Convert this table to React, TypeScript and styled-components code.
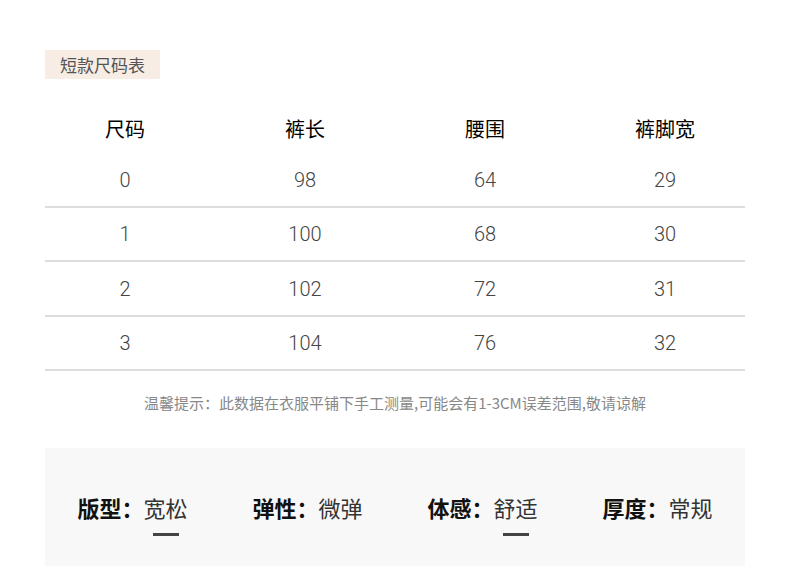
import React from 'react';
import styled, { createGlobalStyle } from 'styled-components';

const FONT = `"Noto Sans CJK SC", "Noto Sans", sans-serif`;
const NUM_FONT = `Roboto, "Noto Sans CJK SC", sans-serif`;

const headers = ['尺码', '裤长', '腰围', '裤脚宽'];
const rows = [
  ['0', '98', '64', '29'],
  ['1', '100', '68', '30'],
  ['2', '102', '72', '31'],
  ['3', '104', '76', '32'],
];

const features = [
  { label: '版型', value: '宽松', marked: true },
  { label: '弹性', value: '微弹', marked: false },
  { label: '体感', value: '舒适', marked: true },
  { label: '厚度', value: '常规', marked: false },
];

export default function App() {
  return (
    <>
      <GlobalStyle />
      <Page>
        <Tag>短款尺码表</Tag>
        <Table>
          <HeadRow>
            <Cells>
              {headers.map((h) => (
                <HeadCell key={h}>{h}</HeadCell>
              ))}
            </Cells>
          </HeadRow>
          {rows.map((r) => (
            <DataRow key={r[0]}>
              <Cells>
                {r.map((v, i) => (
                  <DataCell key={i}>{v}</DataCell>
                ))}
              </Cells>
            </DataRow>
          ))}
        </Table>
        <Note>温馨提示：此数据在衣服平铺下手工测量,可能会有1-3CM误差范围,敬请谅解</Note>
        <FeaturePanel>
          {features.map((f) => (
            <Feature key={f.label}>
              <Label>{f.label}：</Label>
              <ValueWrap>
                <Value>{f.value}</Value>
                {f.marked && <Mark />}
              </ValueWrap>
            </Feature>
          ))}
        </FeaturePanel>
      </Page>
    </>
  );
}

const GlobalStyle = createGlobalStyle`
  html, body {
    margin: 0;
    padding: 0;
    background: #ffffff;
  }
  body {
    font-family: ${FONT};
  }
`;

const Page = styled.div`
  width: 790px;
  height: 567px;
  padding: 50px 45px 0;
  box-sizing: border-box;
  overflow: hidden;
  display: flex;
  flex-direction: column;
  align-items: flex-start;
`;

const Tag = styled.div`
  height: 29px;
  padding: 0 15px;
  background: #f7ede4;
  color: #555;
  font-size: 17px;
  line-height: 29px;
  font-family: ${FONT};
`;

const Table = styled.div`
  width: 700px;
  margin-top: 24px;
`;

// cells spread a little wider than the ruled lines
const Cells = styled.div`
  display: grid;
  grid-template-columns: repeat(4, 180px);
  margin: 0 -10px;
  height: 100%;
  align-items: center;
`;

const HeadRow = styled.div`
  height: 50px;
`;

const HeadCell = styled.div`
  text-align: center;
  font-size: 20px;
  font-weight: 400;
  color: #000;
  font-family: ${FONT};
`;

const DataRow = styled.div`
  height: 52.5px;
  border-bottom: 2px solid #dddddd;
`;

const DataCell = styled.div`
  text-align: center;
  font-size: 20px;
  font-weight: 300;
  color: #444;
  font-family: ${NUM_FONT};
  padding-top: 1px;
`;

const Note = styled.div`
  align-self: center;
  margin-top: 21px;
  font-size: 15px;
  color: #888;
  font-family: ${FONT};
`;

const FeaturePanel = styled.div`
  width: 700px;
  margin-top: 35px;
  height: 118px;
  background: #f8f8f8;
  display: grid;
  grid-template-columns: repeat(4, 1fr);
  align-items: start;
  padding-top: 44px;
  box-sizing: border-box;
`;

const Feature = styled.div`
  display: flex;
  justify-content: center;
  align-items: flex-start;
  font-size: 22px;
  line-height: 30px;
`;

const Label = styled.span`
  font-weight: 700;
  color: #111;
`;

const ValueWrap = styled.span`
  display: flex;
  flex-direction: column;
  align-items: center;
`;

const Value = styled.span`
  color: #333;
`;

const Mark = styled.span`
  width: 26px;
  height: 3px;
  background: #444;
  margin-top: 11px;
`;
